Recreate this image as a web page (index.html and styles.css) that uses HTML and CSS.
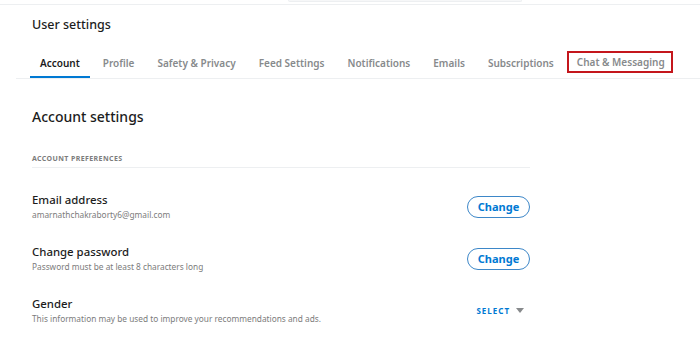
FILE: index.html
```html
<!DOCTYPE html>
<html lang="en">
<head>
    <meta charset="UTF-8">
    <meta name="viewport" content="width=device-width, initial-scale=1.0">
    <title>User settings</title>
    <link rel="stylesheet" href="styles.css">
</head>
<body>
    <header class="top-bar">
        <div class="search-box"></div>
    </header>

    <div class="page-title">User settings</div>

    <nav class="tabs">
        <a class="tab active">Account</a>
        <a class="tab">Profile</a>
        <a class="tab">Safety &amp; Privacy</a>
        <a class="tab">Feed Settings</a>
        <a class="tab">Notifications</a>
        <a class="tab">Emails</a>
        <a class="tab">Subscriptions</a>
        <a class="tab highlighted">Chat &amp; Messaging</a>
    </nav>

    <main class="content">
        <h2 class="section-title">Account settings</h2>
        <div class="group-label">Account preferences</div>

        <div class="setting-row">
            <div class="setting-info">
                <div class="setting-name">Email address</div>
                <div class="setting-desc">amarnathchakraborty6@gmail.com</div>
            </div>
            <button class="pill-button">Change</button>
        </div>

        <div class="setting-row">
            <div class="setting-info">
                <div class="setting-name">Change password</div>
                <div class="setting-desc">Password must be at least 8 characters long</div>
            </div>
            <button class="pill-button">Change</button>
        </div>

        <div class="setting-row">
            <div class="setting-info">
                <div class="setting-name">Gender</div>
                <div class="setting-desc">This information may be used to improve your recommendations and ads.</div>
            </div>
            <div class="select-button">
                SELECT
                <svg width="8" height="5" viewBox="0 0 8 5"><path d="M0 0h8L4 5z" fill="#878a8c"/></svg>
            </div>
        </div>
    </main>
</body>
</html>
```

FILE: styles.css
```css
body {
    margin: 0;
    background: #ffffff;
    font-family: 'Noto Sans', sans-serif;
    color: #1c1c1c;
    overflow: hidden;
}

/* верхняя полоса с краем поиска */
.top-bar {
    height: 4px;
    border-bottom: 1px solid #edeff1;
    padding-left: 288px;
}
.search-box {
    width: 232px;
    height: 1px;
    background: #f6f7f8;
    border: 1px solid #edeff1;
    border-top: none;
    border-radius: 0 0 4px 4px;
}

.page-title {
    font-size: 12.5px;
    font-weight: 500;
    line-height: 18px;
    padding: 11px 0 0 32px;
}

.tabs {
    display: flex;
    align-items: flex-start;
    gap: 3px;
    margin: 16px 0 0 16px;
    padding-left: 14px;
    border-bottom: 1px solid #edeff1;
}
.tab {
    font-size: 10px;
    font-weight: 600;
    color: #878a8c;
    line-height: 15px;
    padding: 6px 10px 5px;
    border-bottom: 2px solid transparent;
    white-space: nowrap;
}
.tab.active {
    color: #1c1c1c;
    border-bottom-color: #0079d3;
}
.tab.highlighted {
    border: 2px solid #c4161c;
    padding: 2px 6px 1px 8px;
    margin-top: 1px;
}

.content {
    width: 498px;
    padding-left: 32px;
}
.section-title {
    margin: 28px 0 0;
    font-size: 14px;
    font-weight: 500;
    line-height: 20px;
}
.group-label {
    margin-top: 27px;
    padding-bottom: 4px;
    border-bottom: 1px solid #edeff1;
    font-size: 7px;
    font-weight: 700;
    letter-spacing: 0.4px;
    text-transform: uppercase;
    color: #7c7c7c;
}

.setting-row {
    display: flex;
    align-items: center;
    justify-content: space-between;
    margin-top: 23px;
}
.group-label + .setting-row {
    margin-top: 24px;
}
.setting-name {
    font-size: 11.4px;
    font-weight: 500;
    line-height: 16px;
}
.setting-desc {
    font-size: 8.3px;
    line-height: 12px;
    color: #7c7c7c;
    margin-top: 1px;
}

.pill-button {
    width: 63px;
    height: 22px;
    border: 1px solid #3d87c8;
    border-radius: 11px;
    background: #ffffff;
    color: #0079d3;
    font-family: 'Noto Sans', sans-serif;
    font-size: 11px;
    font-weight: 700;
    padding: 0;
}

.select-button {
    display: flex;
    align-items: center;
    gap: 6px;
    margin-right: 6px;
    color: #0079d3;
    font-size: 8px;
    font-weight: 700;
    letter-spacing: 1px;
}
```
